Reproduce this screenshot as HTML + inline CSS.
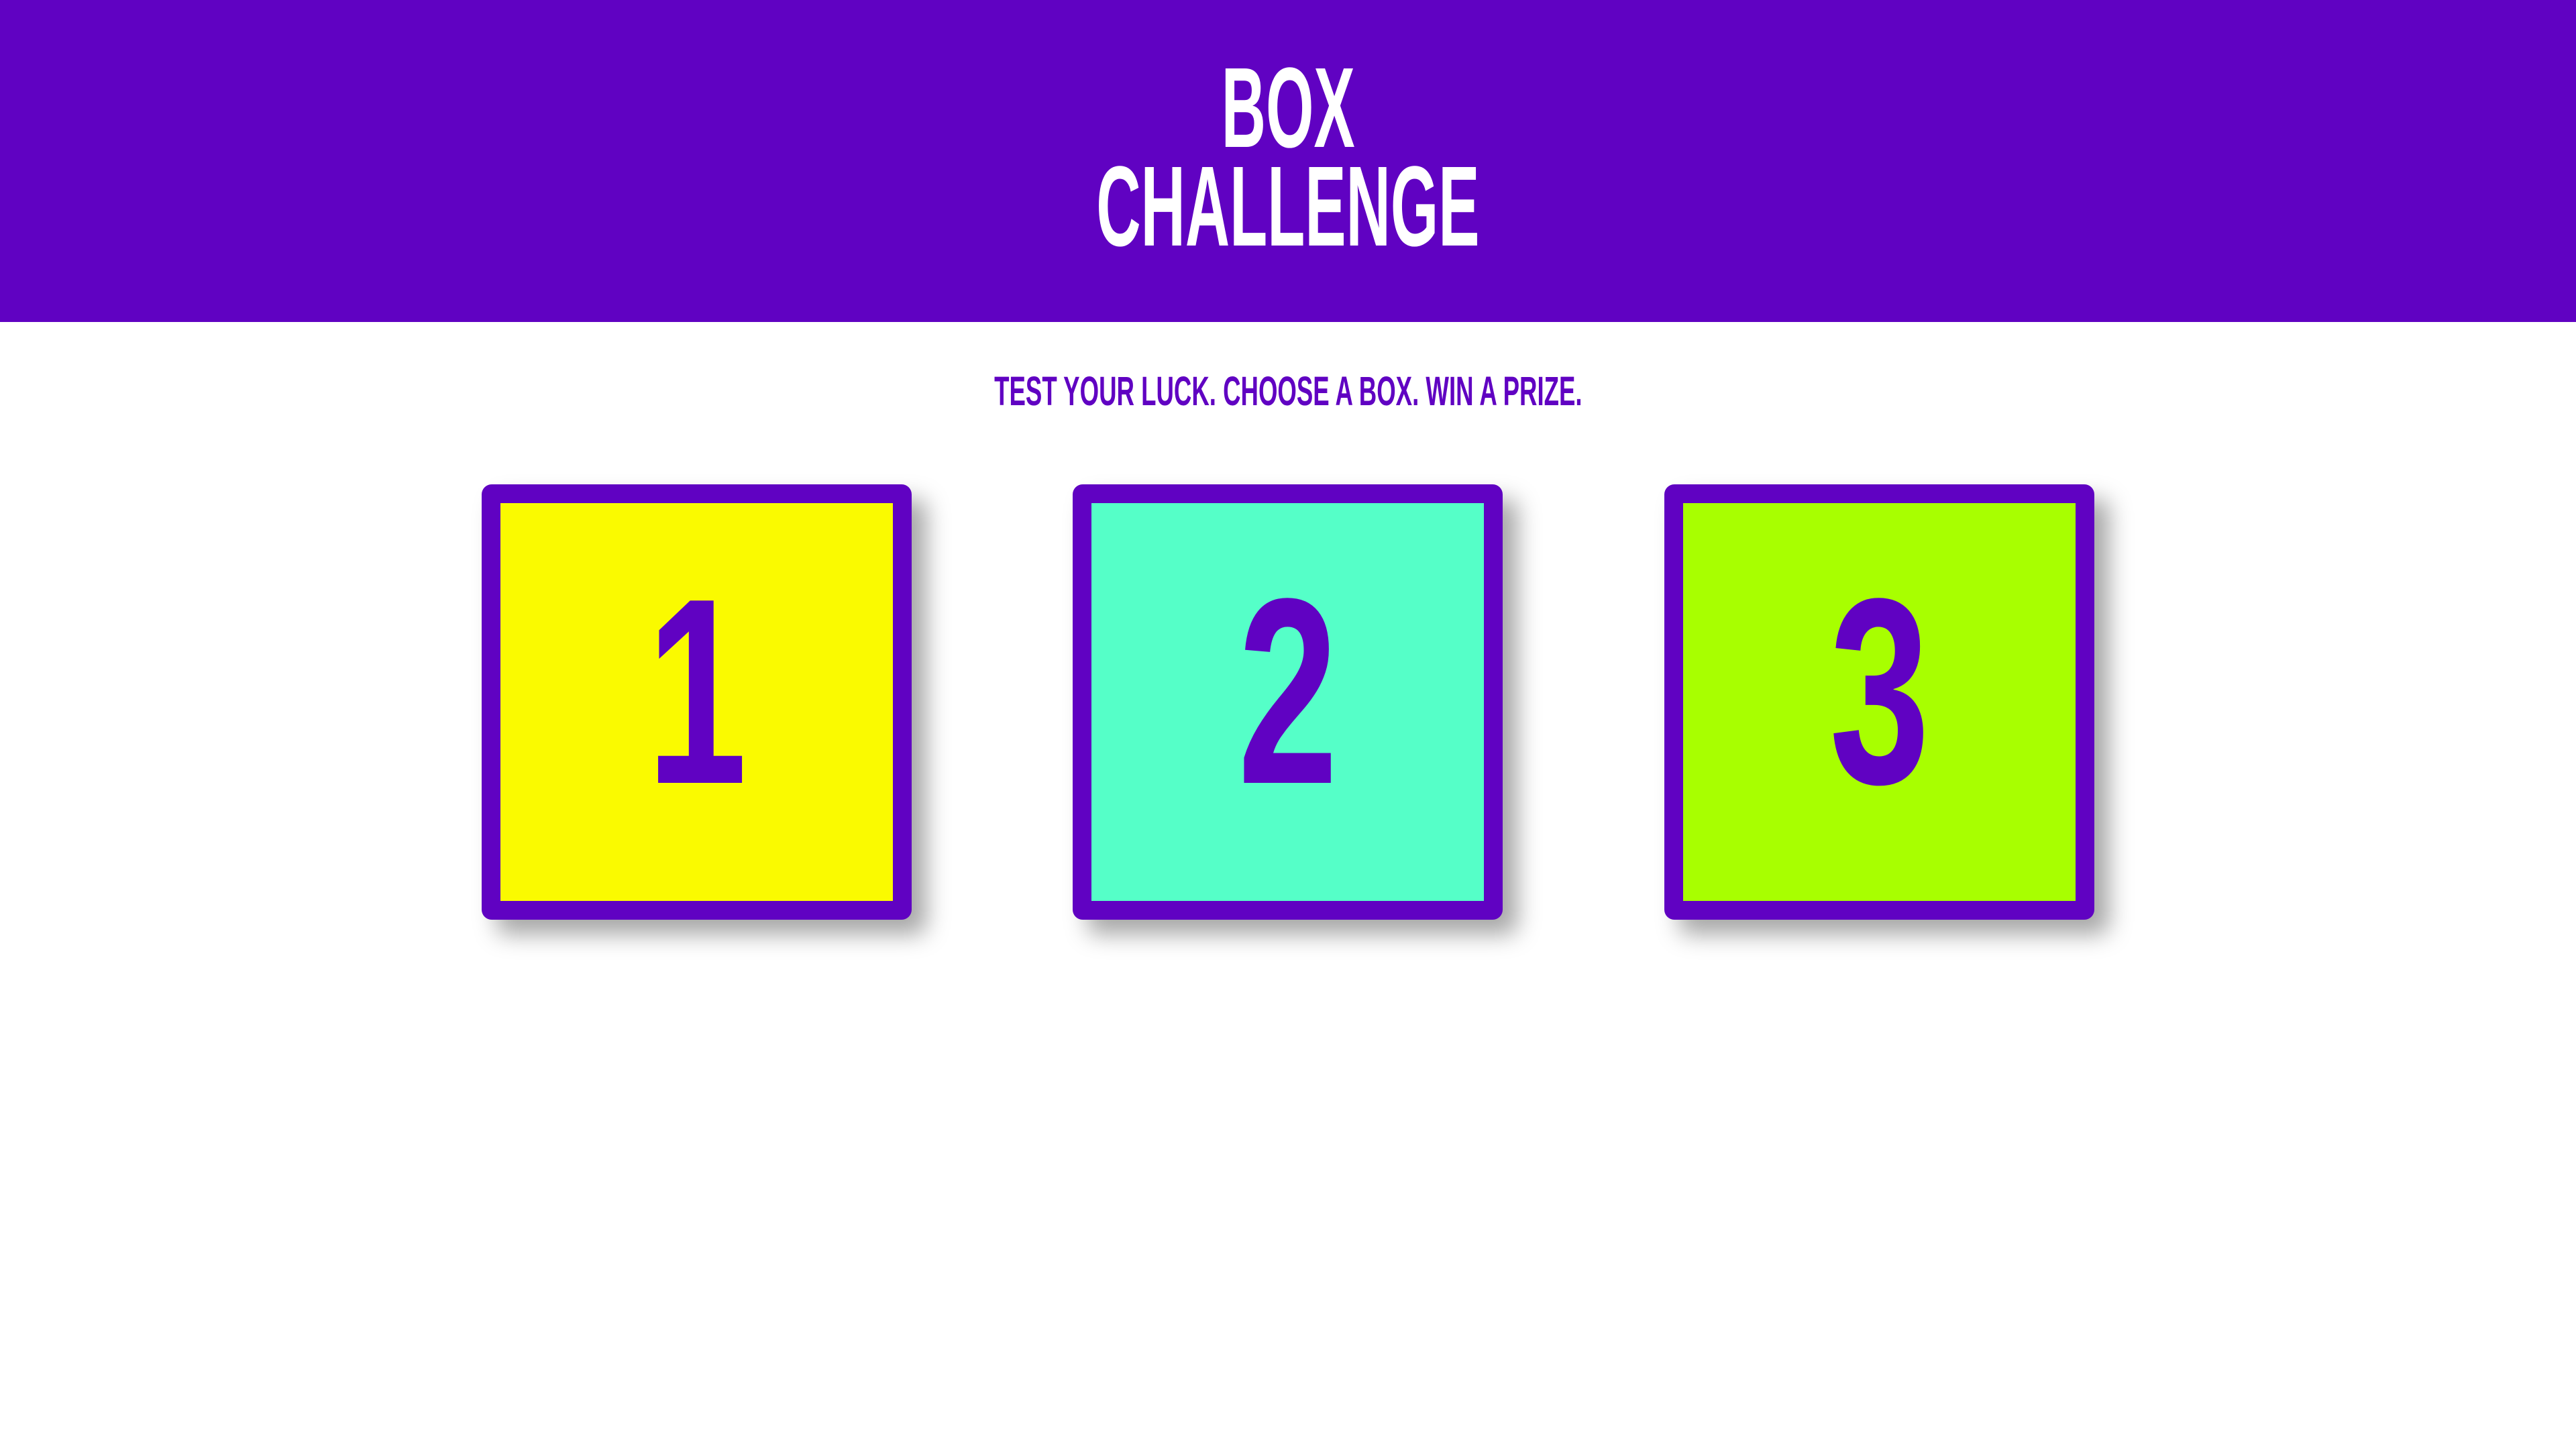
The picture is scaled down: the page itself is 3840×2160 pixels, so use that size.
<!DOCTYPE html>
<html><head><meta charset="utf-8"><style>
html,body{margin:0;padding:0;width:3840px;height:2160px;background:#fff;overflow:hidden;font-family:"Liberation Sans",sans-serif;}
.hdr{position:absolute;left:0;top:0;width:3840px;height:480px;background:#6002c2;}
.t{position:absolute;left:0;width:3840px;text-align:center;font-weight:bold;line-height:1;white-space:nowrap;}
.t span{display:inline-block;transform:scaleX(0.54);transform-origin:center;}
.box{position:absolute;top:722px;width:585px;height:593px;border:28px solid #6002c2;border-radius:15px;box-shadow:22px 22px 34px rgba(0,0,0,.35);}
.d{position:absolute;top:0;left:0;width:100%;text-align:center;font-weight:bold;font-size:395px;line-height:1;color:#6002c2;}
.d span{display:inline-block;transform:scaleX(0.68);}
</style></head><body>
<div class="hdr"></div>
<div class="t" style="top:76px;font-size:170px;color:#fff"><span>BOX</span></div>
<div class="t" style="top:223px;font-size:170px;color:#fff"><span>CHALLENGE</span></div>
<div class="t" style="top:553px;font-size:61px;color:#6002c2"><span style="transform:scaleX(0.60)">TEST YOUR LUCK. CHOOSE A BOX. WIN A PRIZE.</span></div>
<div class="box" style="left:718px;background:#fafa00"><div class="d" style="top:83px"><span>1</span></div></div>
<div class="box" style="left:1599px;background:#55ffc8"><div class="d" style="top:83px"><span>2</span></div></div>
<div class="box" style="left:2481px;background:#a8ff00"><div class="d" style="top:83px"><span>3</span></div></div>
</body></html>
